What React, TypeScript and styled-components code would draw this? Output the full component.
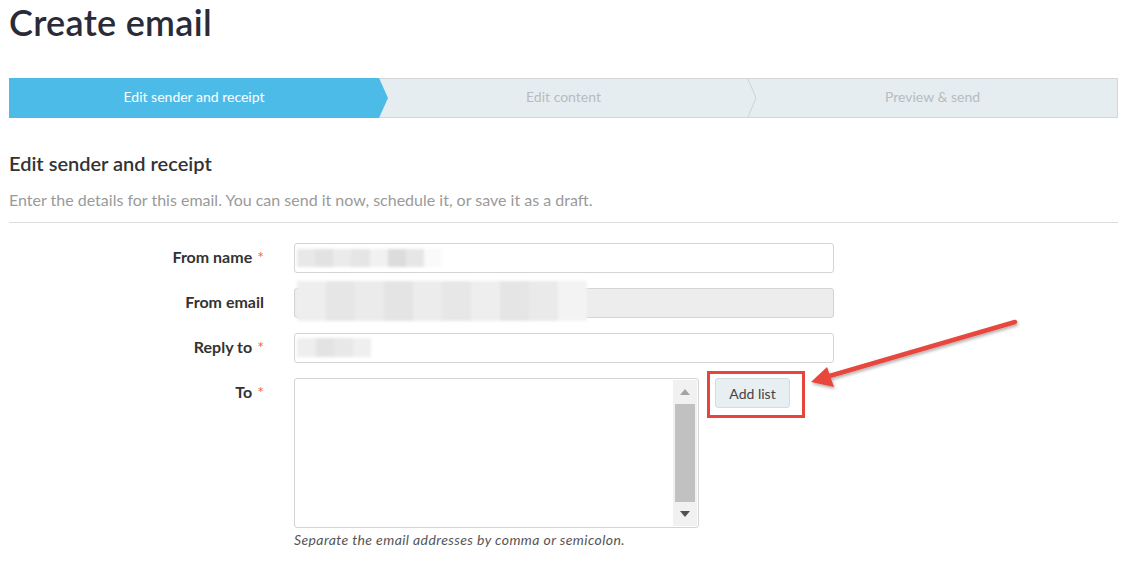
import React from "react";
import styled, { createGlobalStyle } from "styled-components";

const GlobalStyle = createGlobalStyle`
  html, body {
    margin: 0;
    padding: 0;
    background: #fff;
  }
  body {
    font-family: Lato, "Open Sans", Arial, sans-serif;
    color: #333;
  }
  * { box-sizing: border-box; }
`;

const Page = styled.div`
  position: relative;
  width: 1125px;
  height: 563px;
  overflow: hidden;
  padding: 0 7px 0 9px;
`;

const Title = styled.h1`
  margin: 0;
  padding-top: 1px;
  font-size: 36px;
  line-height: 42px;
  font-weight: 600;
  color: #2b2b38;
  letter-spacing: 0.3px;
`;

const Stepper = styled.div`
  display: grid;
  grid-template-columns: repeat(3, 1fr);
  margin-top: 35px;
  height: 40px;
  border: 1px solid #d3d7d9;
  background: #e6edf0;
`;

interface StepProps {
  active?: boolean;
}

const Step = styled.div<StepProps>`
  position: relative;
  display: flex;
  align-items: center;
  justify-content: center;
  padding-bottom: 3px;
  font-size: 14px;
  color: ${({ active }) => (active ? "#fff" : "#b6bcc0")};
  background: ${({ active }) => (active ? "#4dbbe8" : "transparent")};
  margin: ${({ active }) => (active ? "-1px 0 -1px -1px" : "0")};
`;

const ActiveTip = styled.span`
  position: absolute;
  top: 0;
  right: -9px;
  width: 9px;
  height: 100%;
  background: #4dbbe8;
  clip-path: polygon(0 0, 100% 50%, 0 100%);
  z-index: 1;
`;

const ChevronLine = styled.svg`
  position: absolute;
  top: 0;
  right: -9px;
  width: 10px;
  height: 100%;
`;

const SectionTitle = styled.h2`
  margin: 33px 0 0;
  font-size: 20px;
  line-height: 24px;
  font-weight: 600;
  color: #333;
`;

const Description = styled.p`
  margin: 16px 0 0;
  padding-bottom: 13px;
  font-size: 16px;
  line-height: 18px;
  color: #9a9a9a;
  border-bottom: 1px solid #dcdcdc;
`;

const Form = styled.div`
  display: flex;
  flex-direction: column;
  gap: 15px;
  margin-top: 20px;
`;

const Row = styled.div`
  display: grid;
  grid-template-columns: 256px auto;
  column-gap: 29px;
  align-items: start;
`;

const Label = styled.div`
  text-align: right;
  font-size: 16px;
  line-height: 28px;
  font-weight: 700;
  color: #333;
  padding-right: 1px;
`;

const Required = styled.span`
  color: #ef6c4a;
  font-weight: 400;
  margin-left: 5px;
`;

interface InputProps {
  disabled?: boolean;
}

const Input = styled.div<InputProps>`
  position: relative;
  width: 540px;
  height: 30px;
  border: 1px solid #d4d4d4;
  border-radius: 3px;
  background: ${({ disabled }) => (disabled ? "#ededed" : "#fff")};
`;

interface BlurProps {
  w: number;
  h: number;
  top: number;
}

// redacted value, blurred blocks laid over the field
const Blur = styled.div<BlurProps>`
  position: absolute;
  left: 2px;
  top: ${({ top }) => top}px;
  width: ${({ w }) => w}px;
  height: ${({ h }) => h}px;
  display: flex;
  filter: blur(1.5px);
  z-index: 2;
`;

const Block = styled.span<{ shade: string }>`
  flex: 1;
  background: ${({ shade }) => shade};
`;

const ToWrap = styled.div`
  display: flex;
  align-items: flex-start;
  gap: 16px;
`;

const TextArea = styled.div`
  display: flex;
  justify-content: flex-end;
  width: 405px;
  height: 150px;
  border: 1px solid #d4d4d4;
  border-radius: 3px;
  background: #fff;
  padding: 1px;
`;

const Scrollbar = styled.div`
  width: 24px;
  height: 100%;
  background: #f1f1f1;
  display: flex;
  flex-direction: column;
  align-items: center;
  padding: 0 2px;
`;

const ScrollArrow = styled.div`
  height: 24px;
  width: 100%;
  display: flex;
  align-items: center;
  justify-content: center;
`;

const Thumb = styled.div`
  flex: 1;
  width: 100%;
  background: #c1c1c1;
`;

const ButtonFrame = styled.div`
  position: relative;
`;

const RedBox = styled.span`
  position: absolute;
  left: -8px;
  top: -7px;
  right: -15px;
  bottom: -10px;
  border: 3px solid #e6453d;
`;

const Button = styled.button`
  width: 75px;
  height: 30px;
  border: 1px solid #d2dde2;
  border-radius: 3px;
  background: #e7eff2;
  font-family: Lato, "Open Sans", Arial, sans-serif;
  font-size: 14px;
  color: #444;
  padding: 0;
`;

const Help = styled.div`
  grid-column: 2;
  margin-top: 4px;
  font-size: 14px;
  line-height: 16px;
  font-style: italic;
  letter-spacing: 0.4px;
  color: #555;
`;

const Annotation = styled.svg`
  position: absolute;
  left: 0;
  top: 0;
  pointer-events: none;
`;

function Redacted({ w, h, top, shades }: { w: number; h: number; top: number; shades: string[] }) {
  return (
    <Blur w={w} h={h} top={top}>
      {shades.map((s, i) => (
        <Block key={i} shade={s} />
      ))}
    </Blur>
  );
}

export default function App() {
  return (
    <>
      <GlobalStyle />
      <Page>
        <Title>Create email</Title>

        <Stepper>
          <Step active>
            Edit sender and receipt
            <ActiveTip />
          </Step>
          <Step>
            Edit content
            <ChevronLine viewBox="0 0 10 40" preserveAspectRatio="none">
              <polyline points="1,0 9,20 1,40" fill="none" stroke="#cdd3d6" strokeWidth="1" />
            </ChevronLine>
          </Step>
          <Step>Preview &amp; send</Step>
        </Stepper>

        <SectionTitle>Edit sender and receipt</SectionTitle>
        <Description>Enter the details for this email. You can send it now, schedule it, or save it as a draft.</Description>

        <Form>
          <Row>
            <Label>
              From name<Required>*</Required>
            </Label>
            <Input>
              <Redacted
                w={145}
                h={18}
                top={5}
                shades={["#e8e8e8", "#e2e2e2", "#ebebeb", "#e5e5e5", "#f1f1f1", "#dcdcdc", "#e6e6e6", "#fafafa"]}
              />
            </Input>
          </Row>
          <Row>
            <Label>From email</Label>
            <Input disabled>
              <Redacted
                w={290}
                h={40}
                top={-8}
                shades={["#eeeeee", "#e6e6e6", "#ebebeb", "#e4e4e4", "#ececec", "#e7e7e7", "#eeeeee", "#e5e5e5", "#eaeaea", "#f3f3f3"]}
              />
            </Input>
          </Row>
          <Row>
            <Label>
              Reply to<Required>*</Required>
            </Label>
            <Input>
              <Redacted w={74} h={19} top={4} shades={["#eeeeee", "#e3e3e3", "#e8e8e8", "#efefef"]} />
            </Input>
          </Row>
          <Row>
            <Label>
              To<Required>*</Required>
            </Label>
            <ToWrap>
              <TextArea>
                <Scrollbar>
                  <ScrollArrow>
                    <svg width="10" height="6" viewBox="0 0 10 6">
                      <polygon points="0,6 5,0 10,6" fill="#a3a3a3" />
                    </svg>
                  </ScrollArrow>
                  <Thumb />
                  <ScrollArrow>
                    <svg width="10" height="6" viewBox="0 0 10 6">
                      <polygon points="0,0 10,0 5,6" fill="#505050" />
                    </svg>
                  </ScrollArrow>
                </Scrollbar>
              </TextArea>
              <ButtonFrame>
                <RedBox />
                <Button>Add list</Button>
              </ButtonFrame>
            </ToWrap>
            <Help>Separate the email addresses by comma or semicolon.</Help>
          </Row>
        </Form>

        <Annotation width="1125" height="563" viewBox="0 0 1125 563">
          <defs>
            <filter id="shadow" x="-10%" y="-50%" width="120%" height="200%">
              <feDropShadow dx="1" dy="2" stdDeviation="1.5" floodColor="#000" floodOpacity="0.3" />
            </filter>
          </defs>
          <g filter="url(#shadow)">
            <line x1="1015" y1="322" x2="826" y2="377" stroke="#e8463d" strokeWidth="4.5" strokeLinecap="round" />
            <polygon points="811,382 827,367 834,387" fill="#e8463d" />
          </g>
        </Annotation>
      </Page>
    </>
  );
}
